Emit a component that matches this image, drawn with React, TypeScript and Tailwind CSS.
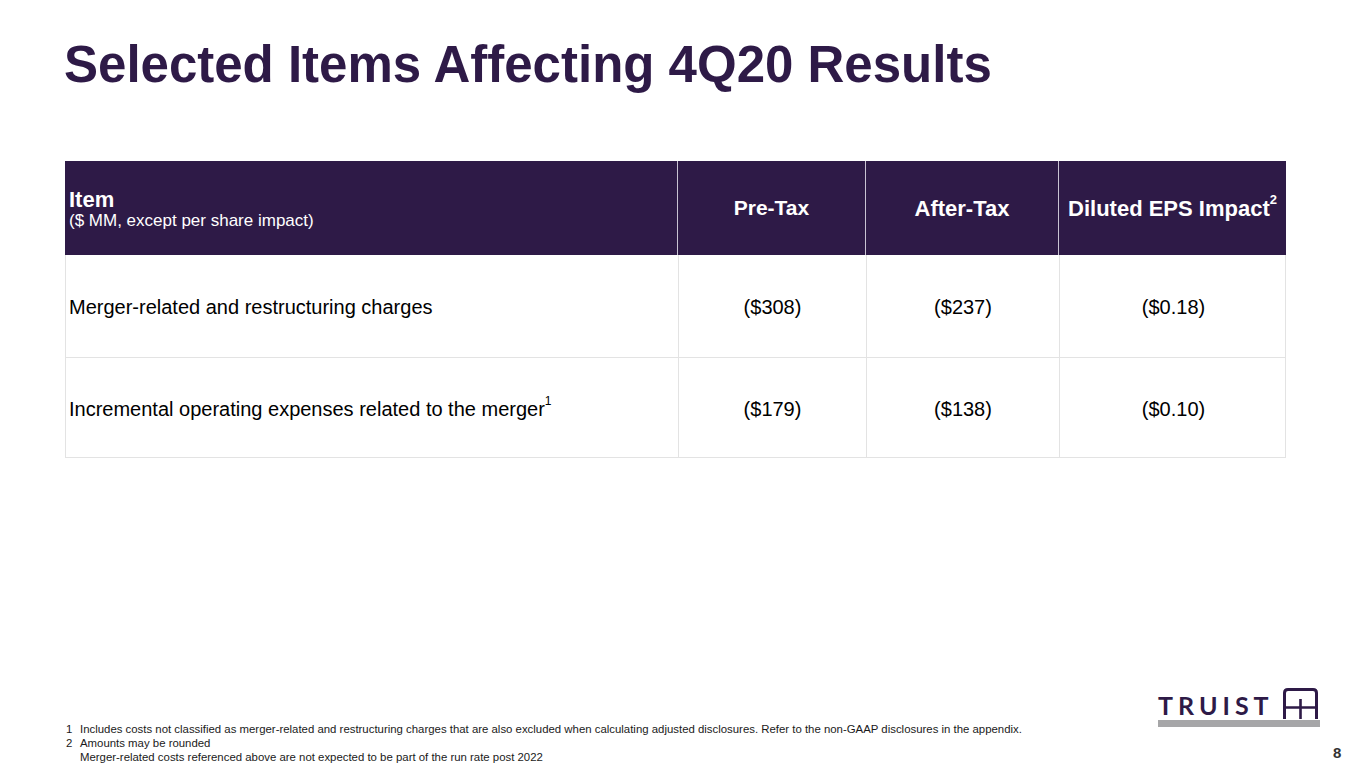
const rows = [
  { item: "Merger-related and restructuring charges", note: "", pre: "($308)", after: "($237)", eps: "($0.18)" },
  { item: "Incremental operating expenses related to the merger", note: "1", pre: "($179)", after: "($138)", eps: "($0.10)" },
];

function TruistLogo() {
  return (
    <div className="flex flex-col items-start">
      <div className="flex items-end h-[31px]">
        <span className="text-[25px] leading-none font-bold tracking-[5px] text-[#2e1a47] font-['Lato',sans-serif] mr-[8px] mb-[1px]">
          TRUIST
        </span>
        <svg width="37" height="31" viewBox="0 0 37 31" fill="none" aria-hidden="true">
          <path d="M2.5 31V5Q2.5 1.5 6 1.5H31Q34.5 1.5 34.5 5V31" stroke="#2e1a47" strokeWidth="3" />
          <path d="M18.5 11V31M2.5 19.5H34.5" stroke="#2e1a47" strokeWidth="2.6" />
        </svg>
      </div>
      <div className="w-[162px] h-[7px] mt-[1px] bg-[#a6a6a8]" />
    </div>
  );
}

export default function App() {
  return (
    <div className="w-[1365px] h-[768px] bg-white relative overflow-hidden font-['Liberation_Sans',Arial,sans-serif]">
      <h1 className="absolute left-[64px] top-[39px] text-[51px] leading-none font-bold text-[#2e1a47]">
        Selected Items Affecting 4Q20 Results
      </h1>

      {/* Table */}
      <div className="absolute left-[65px] top-[161px] w-[1221px]">
        <div className="grid grid-cols-[613px_188px_193px_227px] h-[94px] bg-[#2e1a47] text-white">
          <div className="flex flex-col justify-center pl-[4px] pt-[2px] border-r border-[#c9c3d3]">
            <span className="text-[22px] font-bold leading-[22px]">Item</span>
            <span className="text-[17px] leading-[19px]">($ MM, except per share impact)</span>
          </div>
          <div className="flex items-center justify-center text-[21px] font-bold border-r border-[#c9c3d3]">Pre-Tax</div>
          <div className="flex items-center justify-center text-[22px] font-bold border-r border-[#c9c3d3]">After-Tax</div>
          <div className="flex items-center justify-center text-[22px] font-bold">
            Diluted EPS Impact<sup className="text-[13px] -top-[8px]">2</sup>
          </div>
        </div>
        {rows.map((r, i) => (
          <div
            key={r.item}
            className={`grid grid-cols-[613px_188px_193px_227px] ${i === 0 ? "h-[103px]" : "h-[100px]"} border-b border-l border-r border-[#e3e3e3] text-[20px] text-black`}
          >
            <div className="flex items-center pl-[3px] pt-[2px] border-r border-[#e3e3e3]">
              {r.item}
              {r.note && <sup className="text-[12px] -top-[8px]">{r.note}</sup>}
            </div>
            <div className="flex items-center justify-center pt-[2px] border-r border-[#e3e3e3]">{r.pre}</div>
            <div className="flex items-center justify-center pt-[2px] border-r border-[#e3e3e3]">{r.after}</div>
            <div className="flex items-center justify-center pt-[2px]">{r.eps}</div>
          </div>
        ))}
      </div>

      {/* Footnotes */}
      <div className="absolute left-[66px] top-[722px] text-[11.4px] leading-[14px] text-[#1a1a1a]">
        <div className="flex">
          <span className="w-[14px]">1</span>
          <span>
            Includes costs not classified as merger-related and restructuring charges that are also excluded when calculating adjusted disclosures. Refer to the non-GAAP disclosures in the appendix.
          </span>
        </div>
        <div className="flex">
          <span className="w-[14px]">2</span>
          <span>Amounts may be rounded</span>
        </div>
        <div className="pl-[14px]">Merger-related costs referenced above are not expected to be part of the run rate post 2022</div>
      </div>

      <div className="absolute left-[1158px] top-[688px]">
        <TruistLogo />
      </div>

      <div className="absolute left-[1333px] top-[742px] text-[15px] font-bold text-[#333333]">8</div>
    </div>
  );
}
